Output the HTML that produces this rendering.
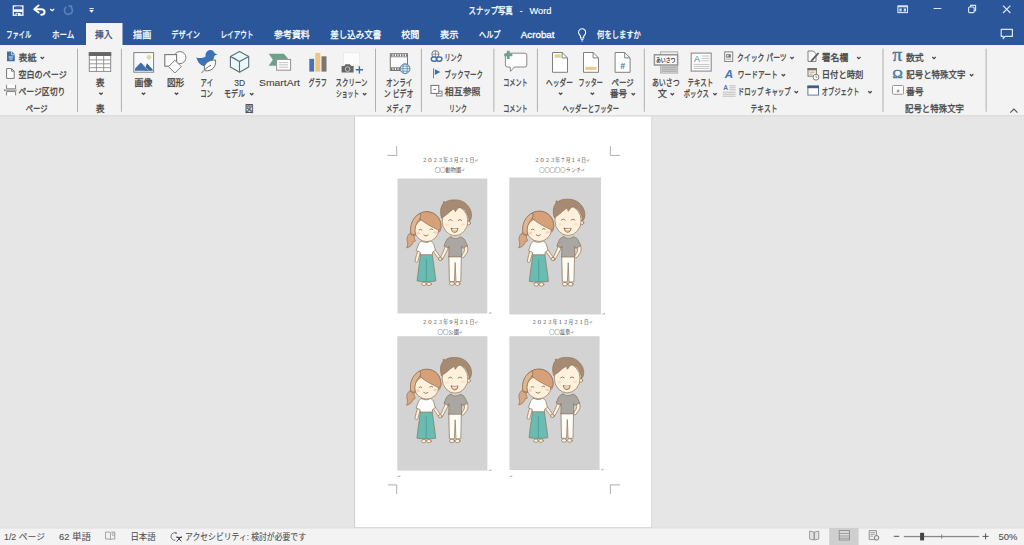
<!DOCTYPE html>
<html lang="ja"><head><meta charset="utf-8"><title>スナップ写真 - Word</title>
<style>html,body{margin:0;padding:0;background:#e6e6e6;overflow:hidden}body{width:1024px;height:545px;position:relative}svg{position:absolute;left:0;top:0;display:block}.t{font-family:"Liberation Sans","Noto Sans CJK JP",sans-serif;}.s{font-family:"Liberation Serif","Noto Serif CJK SC",serif;}text{white-space:pre}</style></head><body>
<svg width="1024" height="545" viewBox="0 0 1024 545">
<rect x="0" y="0" width="1024" height="545" fill="#e6e6e6"/>
<rect x="0" y="0" width="1024" height="45.3" fill="#2b579a"/>
<rect x="0" y="45" width="1024" height="70.4" fill="#f3f3f3"/>
<rect x="0" y="115.2" width="1024" height="1.3" fill="#dbdbdb"/>
<rect x="86" y="23" width="36.5" height="23" fill="#f3f3f3"/>
<rect x="354.2" y="116.5" width="297.9" height="411.5" fill="#cdcdcd"/>
<rect x="355.1" y="116.5" width="296.3" height="410.7" fill="#ffffff"/>
<rect x="0" y="528" width="1024" height="17" fill="#f3f3f3"/>
<rect x="0" y="527.6" width="1024" height="0.9" fill="#dedede"/>
<text class="t" x="468.60" y="14.24" font-size="9" fill="#fff" stroke="#fff" stroke-width="0.28" textLength="44.10" lengthAdjust="spacingAndGlyphs">スナップ写真</text>
<text class="t" x="520.00" y="14.24" font-size="9" fill="#fff" stroke="#fff" stroke-width="0.28" textLength="2.40" lengthAdjust="spacingAndGlyphs">-</text>
<text class="t" x="529.50" y="14.24" font-size="9" fill="#fff" stroke="#fff" stroke-width="0.12" textLength="22.00" lengthAdjust="spacingAndGlyphs">Word</text>
<g fill="none" stroke="#fff" stroke-width="1.3"><rect x="13.3" y="6" width="9.6" height="9.2"/></g>
<rect x="13.3" y="9.3" width="9.6" height="2.6" fill="#fff"/>
<rect x="15.6" y="12.9" width="5" height="2.6" fill="#fff"/>
<rect x="16.6" y="13.6" width="1.4" height="1.9" fill="#2b579a"/>
<rect x="15.3" y="6.4" width="5.8" height="2.2" fill="#3c66a8"/>
<path d="M35.5 9.2 H41 C43.6 9.2 44.6 10.6 44.6 12 C44.6 13.7 43.2 14.7 41.2 14.7" fill="none" stroke="#fff" stroke-width="1.9" stroke-linecap="round"/>
<path d="M38.6 5.4 L34.2 9.2 L38.6 12.6" fill="none" stroke="#fff" stroke-width="1.9" stroke-linejoin="round" stroke-linecap="round"/>
<path d="M50.2 9 L52.2 10.7 L54.2 9" fill="none" stroke="#fff" stroke-width="1.3"/>
<path d="M70.6 7 A4 4 0 1 1 66.2 7" fill="none" stroke="#5b80bb" stroke-width="1.6"/>
<path d="M68.3 6 H71.5 V9.2" fill="none" stroke="#5b80bb" stroke-width="1.4"/>
<rect x="89.4" y="8.2" width="4.4" height="0.9" fill="#fff"/>
<path d="M89.3 10 H93.9 L91.6 12.7 Z" fill="#fff"/>
<rect x="897.9" y="6" width="9.6" height="6.6" fill="none" stroke="#dbe4f3" stroke-width="1.1"/>
<rect x="897.9" y="5.6" width="9.6" height="1.7" fill="#dbe4f3"/>
<path d="M899.4 11.4 V8.6 H901.8 V11.4 Z M903.6 11.4 V8.6 H906 V11.4 Z" fill="#dbe4f3"/>
<path d="M901.2 10.4 L902.7 8.9 L904.2 10.4" fill="none" stroke="#2b579a" stroke-width="0.8"/>
<rect x="933.6" y="8" width="7.8" height="1" fill="#dbe4f3"/>
<rect x="968.6" y="7" width="5.6" height="5.6" rx="1" fill="none" stroke="#dbe4f3" stroke-width="1.1"/>
<path d="M970.6 7 V5.4 H975.6 V10.6 H974.2" fill="none" stroke="#dbe4f3" stroke-width="1.1"/>
<path d="M1003 5.6 L1010.4 13 M1010.4 5.6 L1003 13" fill="none" stroke="#dbe4f3" stroke-width="1.2"/>
<path d="M1001.2 29.3 H1012.4 V36.4 H1005 L1003.2 38.6 V36.4 H1001.2 Z" fill="none" stroke="#dbe4f3" stroke-width="1.2" stroke-linejoin="round"/>
<path d="M580.6 38 V36.6 C580.6 35.4 578.6 34.6 578.6 32.4 A3.5 3.6 0 0 1 585.7 32.4 C585.7 34.6 583.7 35.4 583.7 36.6 V38 Z" fill="none" stroke="#fff" stroke-width="1.1" stroke-linejoin="round"/>
<path d="M580.8 39.6 H583.5 M581.3 41 H583" fill="none" stroke="#fff" stroke-width="0.9"/>
<text class="t" x="6.30" y="38.04" font-size="9" fill="#ffffff" stroke="#ffffff" stroke-width="0.28" textLength="24.90" lengthAdjust="spacingAndGlyphs">ファイル</text>
<text class="t" x="52.00" y="38.04" font-size="9" fill="#ffffff" stroke="#ffffff" stroke-width="0.28" textLength="22.40" lengthAdjust="spacingAndGlyphs">ホーム</text>
<text class="t" x="133.10" y="38.04" font-size="9" fill="#ffffff" stroke="#ffffff" stroke-width="0.28" textLength="18.20" lengthAdjust="spacingAndGlyphs">描画</text>
<text class="t" x="171.30" y="38.04" font-size="9" fill="#ffffff" stroke="#ffffff" stroke-width="0.28" textLength="28.70" lengthAdjust="spacingAndGlyphs">デザイン</text>
<text class="t" x="220.40" y="38.04" font-size="9" fill="#ffffff" stroke="#ffffff" stroke-width="0.28" textLength="33.10" lengthAdjust="spacingAndGlyphs">レイアウト</text>
<text class="t" x="274.10" y="38.04" font-size="9" fill="#ffffff" stroke="#ffffff" stroke-width="0.28" textLength="35.70" lengthAdjust="spacingAndGlyphs">参考資料</text>
<text class="t" x="330.30" y="38.04" font-size="9" fill="#ffffff" stroke="#ffffff" stroke-width="0.28" textLength="51.00" lengthAdjust="spacingAndGlyphs">差し込み文書</text>
<text class="t" x="401.30" y="38.04" font-size="9" fill="#ffffff" stroke="#ffffff" stroke-width="0.28" textLength="18.10" lengthAdjust="spacingAndGlyphs">校閲</text>
<text class="t" x="440.00" y="38.04" font-size="9" fill="#ffffff" stroke="#ffffff" stroke-width="0.28" textLength="18.50" lengthAdjust="spacingAndGlyphs">表示</text>
<text class="t" x="479.00" y="38.04" font-size="9" fill="#ffffff" stroke="#ffffff" stroke-width="0.28" textLength="21.50" lengthAdjust="spacingAndGlyphs">ヘルプ</text>
<text class="t" x="520.80" y="38.04" font-size="9" fill="#ffffff" stroke="#ffffff" stroke-width="0.28" textLength="33.70" lengthAdjust="spacingAndGlyphs">Acrobat</text>
<text class="t" x="597.10" y="38.04" font-size="9" fill="#ffffff" stroke="#ffffff" stroke-width="0.28" textLength="43.80" lengthAdjust="spacingAndGlyphs">何をしますか</text>
<text class="t" x="95.00" y="38.14" font-size="9" fill="#34507e" stroke="#34507e" stroke-width="0.28" textLength="17.40" lengthAdjust="spacingAndGlyphs">挿入</text>
<rect x="77.00" y="48.6" width="1" height="63.199999999999996" fill="#b0b0b0"/>
<rect x="120.90" y="48.6" width="1" height="63.199999999999996" fill="#b0b0b0"/>
<rect x="375.00" y="48.6" width="1" height="63.199999999999996" fill="#b0b0b0"/>
<rect x="420.90" y="48.6" width="1" height="63.199999999999996" fill="#b0b0b0"/>
<rect x="493.40" y="48.6" width="1" height="63.199999999999996" fill="#b0b0b0"/>
<rect x="536.90" y="48.6" width="1" height="63.199999999999996" fill="#b0b0b0"/>
<rect x="643.80" y="48.6" width="1" height="63.199999999999996" fill="#b0b0b0"/>
<rect x="882.50" y="48.6" width="1" height="63.199999999999996" fill="#b0b0b0"/>
<rect x="985.60" y="48.6" width="1" height="63.199999999999996" fill="#b0b0b0"/>
<text class="t" x="18.50" y="61.14" font-size="9" fill="#444444" stroke="#444444" stroke-width="0.28" textLength="17.80" lengthAdjust="spacingAndGlyphs">表紙</text>
<path d="M40.60 57.00 L42.30 58.60 L44.00 57.00" fill="none" stroke="#4a4a4a" stroke-width="1.3"/>
<text class="t" x="18.50" y="78.24" font-size="9" fill="#444444" stroke="#444444" stroke-width="0.28" textLength="48.20" lengthAdjust="spacingAndGlyphs">空白のページ</text>
<text class="t" x="18.50" y="95.24" font-size="9" fill="#444444" stroke="#444444" stroke-width="0.28" textLength="46.90" lengthAdjust="spacingAndGlyphs">ページ区切り</text>
<text class="t" x="444.40" y="61.14" font-size="9" fill="#444444" stroke="#444444" stroke-width="0.28" textLength="18.10" lengthAdjust="spacingAndGlyphs">リンク</text>
<text class="t" x="444.40" y="78.24" font-size="9" fill="#444444" stroke="#444444" stroke-width="0.28" textLength="38.60" lengthAdjust="spacingAndGlyphs">ブックマーク</text>
<text class="t" x="444.80" y="95.24" font-size="9" fill="#444444" stroke="#444444" stroke-width="0.28" textLength="35.70" lengthAdjust="spacingAndGlyphs">相互参照</text>
<text class="t" x="737.10" y="61.14" font-size="9" fill="#444444" stroke="#444444" stroke-width="0.28" textLength="49.60" lengthAdjust="spacingAndGlyphs">クイック パーツ</text>
<path d="M790.30 57.00 L792.00 58.60 L793.70 57.00" fill="none" stroke="#4a4a4a" stroke-width="1.3"/>
<text class="t" x="737.80" y="78.24" font-size="9" fill="#444444" stroke="#444444" stroke-width="0.28" textLength="40.00" lengthAdjust="spacingAndGlyphs">ワードアート</text>
<path d="M781.70 74.20 L783.40 75.80 L785.10 74.20" fill="none" stroke="#4a4a4a" stroke-width="1.3"/>
<text class="t" x="737.80" y="95.24" font-size="9" fill="#444444" stroke="#444444" stroke-width="0.28" textLength="52.80" lengthAdjust="spacingAndGlyphs">ドロップ キャップ</text>
<path d="M794.60 91.20 L796.30 92.80 L798.00 91.20" fill="none" stroke="#4a4a4a" stroke-width="1.3"/>
<text class="t" x="821.80" y="61.14" font-size="9" fill="#444444" stroke="#444444" stroke-width="0.28" textLength="26.40" lengthAdjust="spacingAndGlyphs">署名欄</text>
<path d="M857.10 57.00 L858.80 58.60 L860.50 57.00" fill="none" stroke="#4a4a4a" stroke-width="1.3"/>
<text class="t" x="821.80" y="78.24" font-size="9" fill="#444444" stroke="#444444" stroke-width="0.28" textLength="41.60" lengthAdjust="spacingAndGlyphs">日付と時刻</text>
<text class="t" x="821.80" y="95.24" font-size="9" fill="#444444" stroke="#444444" stroke-width="0.28" textLength="37.60" lengthAdjust="spacingAndGlyphs">オブジェクト</text>
<path d="M868.30 91.20 L870.00 92.80 L871.70 91.20" fill="none" stroke="#4a4a4a" stroke-width="1.3"/>
<text class="t" x="905.90" y="61.14" font-size="9" fill="#444444" stroke="#444444" stroke-width="0.28" textLength="17.80" lengthAdjust="spacingAndGlyphs">数式</text>
<path d="M932.30 57.00 L934.00 58.60 L935.70 57.00" fill="none" stroke="#4a4a4a" stroke-width="1.3"/>
<text class="t" x="906.30" y="78.24" font-size="9" fill="#444444" stroke="#444444" stroke-width="0.28" textLength="59.10" lengthAdjust="spacingAndGlyphs">記号と特殊文字</text>
<path d="M969.90 74.20 L971.60 75.80 L973.30 74.20" fill="none" stroke="#4a4a4a" stroke-width="1.3"/>
<text class="t" x="905.90" y="95.24" font-size="9" fill="#444444" stroke="#444444" stroke-width="0.28" textLength="17.80" lengthAdjust="spacingAndGlyphs">番号</text>
<text class="t" x="95.80" y="85.54" font-size="9" fill="#444444" stroke="#444444" stroke-width="0.28" textLength="8.80" lengthAdjust="spacingAndGlyphs">表</text>
<path d="M99.30 92.70 L101.00 94.30 L102.70 92.70" fill="none" stroke="#4a4a4a" stroke-width="1.3"/>
<text class="t" x="134.50" y="85.54" font-size="9" fill="#444444" stroke="#444444" stroke-width="0.28" textLength="17.90" lengthAdjust="spacingAndGlyphs">画像</text>
<path d="M141.80 92.70 L143.50 94.30 L145.20 92.70" fill="none" stroke="#4a4a4a" stroke-width="1.3"/>
<text class="t" x="166.90" y="85.54" font-size="9" fill="#444444" stroke="#444444" stroke-width="0.28" textLength="17.30" lengthAdjust="spacingAndGlyphs">図形</text>
<path d="M174.80 92.70 L176.50 94.30 L178.20 92.70" fill="none" stroke="#4a4a4a" stroke-width="1.3"/>
<text class="t" x="200.60" y="85.54" font-size="9" fill="#444444" stroke="#444444" stroke-width="0.28" textLength="12.40" lengthAdjust="spacingAndGlyphs">アイ</text>
<text class="t" x="200.20" y="97.24" font-size="9" fill="#444444" stroke="#444444" stroke-width="0.28" textLength="12.80" lengthAdjust="spacingAndGlyphs">コン</text>
<text class="t" x="234.30" y="85.54" font-size="9" fill="#444444" stroke="#444444" stroke-width="0.12" textLength="10.80" lengthAdjust="spacingAndGlyphs">3D</text>
<text class="t" x="224.00" y="97.24" font-size="9" fill="#444444" stroke="#444444" stroke-width="0.28" textLength="21.10" lengthAdjust="spacingAndGlyphs">モデル</text>
<path d="M250.00 93.20 L251.70 94.80 L253.40 93.20" fill="none" stroke="#4a4a4a" stroke-width="1.3"/>
<text class="t" x="259.00" y="85.54" font-size="9" fill="#444444" stroke="#444444" stroke-width="0.1" textLength="41.00" lengthAdjust="spacingAndGlyphs">SmartArt</text>
<text class="t" x="308.50" y="85.54" font-size="9" fill="#444444" stroke="#444444" stroke-width="0.28" textLength="18.50" lengthAdjust="spacingAndGlyphs">グラフ</text>
<text class="t" x="335.60" y="85.54" font-size="9" fill="#444444" stroke="#444444" stroke-width="0.28" textLength="32.00" lengthAdjust="spacingAndGlyphs">スクリーン</text>
<text class="t" x="335.90" y="97.24" font-size="9" fill="#444444" stroke="#444444" stroke-width="0.28" textLength="23.10" lengthAdjust="spacingAndGlyphs">ショット</text>
<path d="M362.90 93.20 L364.60 94.80 L366.30 93.20" fill="none" stroke="#4a4a4a" stroke-width="1.3"/>
<text class="t" x="386.00" y="85.54" font-size="9" fill="#444444" stroke="#444444" stroke-width="0.28" textLength="26.50" lengthAdjust="spacingAndGlyphs">オンライ</text>
<text class="t" x="383.80" y="97.24" font-size="9" fill="#444444" stroke="#444444" stroke-width="0.28" textLength="29.70" lengthAdjust="spacingAndGlyphs">ン ビデオ</text>
<text class="t" x="503.20" y="85.54" font-size="9" fill="#444444" stroke="#444444" stroke-width="0.28" textLength="24.40" lengthAdjust="spacingAndGlyphs">コメント</text>
<text class="t" x="546.10" y="85.54" font-size="9" fill="#444444" stroke="#444444" stroke-width="0.28" textLength="26.80" lengthAdjust="spacingAndGlyphs">ヘッダー</text>
<path d="M558.90 92.70 L560.60 94.30 L562.30 92.70" fill="none" stroke="#4a4a4a" stroke-width="1.3"/>
<text class="t" x="578.60" y="85.54" font-size="9" fill="#444444" stroke="#444444" stroke-width="0.28" textLength="24.10" lengthAdjust="spacingAndGlyphs">フッター</text>
<path d="M590.70 92.70 L592.40 94.30 L594.10 92.70" fill="none" stroke="#4a4a4a" stroke-width="1.3"/>
<text class="t" x="611.60" y="85.54" font-size="9" fill="#444444" stroke="#444444" stroke-width="0.28" textLength="22.10" lengthAdjust="spacingAndGlyphs">ページ</text>
<text class="t" x="609.90" y="97.24" font-size="9" fill="#444444" stroke="#444444" stroke-width="0.28" textLength="17.20" lengthAdjust="spacingAndGlyphs">番号</text>
<path d="M631.60 93.20 L633.30 94.80 L635.00 93.20" fill="none" stroke="#4a4a4a" stroke-width="1.3"/>
<text class="t" x="651.90" y="85.54" font-size="9" fill="#444444" stroke="#444444" stroke-width="0.28" textLength="27.70" lengthAdjust="spacingAndGlyphs">あいさつ</text>
<text class="t" x="657.80" y="97.24" font-size="9" fill="#444444" stroke="#444444" stroke-width="0.28" textLength="9.20" lengthAdjust="spacingAndGlyphs">文</text>
<path d="M670.60 93.20 L672.30 94.80 L674.00 93.20" fill="none" stroke="#4a4a4a" stroke-width="1.3"/>
<text class="t" x="687.50" y="85.54" font-size="9" fill="#444444" stroke="#444444" stroke-width="0.28" textLength="25.80" lengthAdjust="spacingAndGlyphs">テキスト</text>
<text class="t" x="683.80" y="97.24" font-size="9" fill="#444444" stroke="#444444" stroke-width="0.28" textLength="25.10" lengthAdjust="spacingAndGlyphs">ボックス</text>
<path d="M713.30 93.20 L715.00 94.80 L716.70 93.20" fill="none" stroke="#4a4a4a" stroke-width="1.3"/>
<text class="t" x="25.80" y="112.49" font-size="9" fill="#444444" stroke="#444444" stroke-width="0.28" textLength="21.80" lengthAdjust="spacingAndGlyphs">ページ</text>
<text class="t" x="95.80" y="112.49" font-size="9" fill="#444444" stroke="#444444" stroke-width="0.28" textLength="8.80" lengthAdjust="spacingAndGlyphs">表</text>
<text class="t" x="245.00" y="112.49" font-size="9" fill="#444444" stroke="#444444" stroke-width="0.28" textLength="8.40" lengthAdjust="spacingAndGlyphs">図</text>
<text class="t" x="386.00" y="112.49" font-size="9" fill="#444444" stroke="#444444" stroke-width="0.28" textLength="25.00" lengthAdjust="spacingAndGlyphs">メディア</text>
<text class="t" x="449.00" y="112.49" font-size="9" fill="#444444" stroke="#444444" stroke-width="0.28" textLength="17.90" lengthAdjust="spacingAndGlyphs">リンク</text>
<text class="t" x="503.20" y="112.49" font-size="9" fill="#444444" stroke="#444444" stroke-width="0.28" textLength="24.40" lengthAdjust="spacingAndGlyphs">コメント</text>
<text class="t" x="562.40" y="112.49" font-size="9" fill="#444444" stroke="#444444" stroke-width="0.28" textLength="56.80" lengthAdjust="spacingAndGlyphs">ヘッダーとフッター</text>
<text class="t" x="750.60" y="112.49" font-size="9" fill="#444444" stroke="#444444" stroke-width="0.28" textLength="26.80" lengthAdjust="spacingAndGlyphs">テキスト</text>
<text class="t" x="905.00" y="112.49" font-size="9" fill="#444444" stroke="#444444" stroke-width="0.28" textLength="59.00" lengthAdjust="spacingAndGlyphs">記号と特殊文字</text>
<path d="M1010.3 112.6 L1013.9 109 L1017.5 112.6" fill="none" stroke="#555" stroke-width="1.1"/>
<path d="M7 51.4 H12 L14.8 54.4 V61.2 H7 Z" fill="#3f6fa8"/>
<path d="M11.6 51.4 V54.8 H14.8" fill="none" stroke="#d6e2f2" stroke-width="0.9"/>
<path d="M8.6 57 H13.2 M9.4 59 H12.4" stroke="#e8eef8" stroke-width="1"/>
<path d="M6.6 68.6 H11.6 L14.2 71.19999999999999 V78.39999999999999 H6.6 Z" fill="#fff" stroke="#777" stroke-width="1.0" stroke-linejoin="round"/>
<path d="M11.6 68.6 V71.19999999999999 H14.2" fill="none" stroke="#777" stroke-width="1.0" stroke-linejoin="round"/>
<path d="M6.6 84.8 V88.8 H15.6 V84.8 M6.6 95.4 V91.6 H15.6 V95.4" fill="#fff" stroke="#808080" stroke-width="1"/>
<path d="M4.4 90.2 H16.8" stroke="#808080" stroke-width="0.9"/>
<path d="M4.2 88.9 L5.6 90.2 L4.2 91.5 Z" fill="#808080"/>
<rect x="89.3" y="52.6" width="21.4" height="18.8" fill="#fff" stroke="#8c8c8c" stroke-width="1"/>
<rect x="88.8" y="52.1" width="22.4" height="3.9" fill="#666"/>
<path d="M96.4 56 V71.4 M103.7 56 V71.4 M89.3 59.9 H110.7 M89.3 63.8 H110.7 M89.3 67.7 H110.7" stroke="#8c8c8c" stroke-width="0.9" fill="none"/>
<rect x="133.8" y="52.6" width="19.8" height="19.6" fill="#f6fafc" stroke="#7d7d7d" stroke-width="0.95"/>
<circle cx="148.9" cy="57.3" r="2.4" fill="#e2db9e"/>
<path d="M144.4 70.8 L146.9 63.3 L152.6 69.6 V70.8 Z" fill="#3b5f8e"/>
<path d="M135 70.8 V68.6 L140.8 62.4 L149.4 70.8 Z" fill="#3f6fa8"/>
<path d="M143.2 64.8 L149 70.8" stroke="#b9d0e8" stroke-width="0.7" fill="none"/>
<circle cx="179.9" cy="57.6" r="6" fill="#fcfcfc" stroke="#808080" stroke-width="1"/>
<rect x="164.8" y="54.6" width="11.8" height="11.6" fill="#fcfcfc" stroke="#777" stroke-width="1.1"/>
<path d="M174.9 60.2 L181.3 66.6 L174.9 73 L168.5 66.6 Z" fill="#fcfcfc" stroke="#808080" stroke-width="1"/>
<path d="M196.3 57.2 C198.5 58.6 202.5 58.4 205.6 56.6 C205 52.4 208 49.9 210.6 50.1 C213 50.2 214.4 52 214.6 53.2 L217.4 54.2 L214.4 55.8 C213.6 60 212 63.4 207 65.6 C202.5 67 198.4 64.4 196.3 57.2 Z" fill="#3b72b8"/>
<path d="M215.5 60 C216.4 66.4 212.4 71.4 205.2 70.8 C202.2 66 206.5 59.8 215.5 60 Z" fill="#fdfdfd" stroke="#6e6e6e" stroke-width="1"/>
<path d="M201.6 73 C204.4 69.6 207.4 66.8 211 65.2" fill="none" stroke="#6e6e6e" stroke-width="1"/>
<path d="M239.5 51.4 L248.7 56.4 V66.9 L239.5 72.2 L230.4 66.9 V56.4 Z" fill="#e9f8fb" stroke="#5c7076" stroke-width="1.1" stroke-linejoin="round"/>
<path d="M230.4 56.4 L239.5 61.6 L248.7 56.4 M239.5 61.6 V72.2 M232.8 57.6 L236.6 59.8" fill="none" stroke="#5c7076" stroke-width="1.1"/>
<path d="M268.7 53.8 H284 L288.7 59.8 L284 65.7 H268.7 L272.8 59.8 Z" fill="#6fa08c"/>
<rect x="276.6" y="59.4" width="14" height="10.8" fill="#fdfdfd" stroke="#929292" stroke-width="1"/>
<path d="M279 62.6 H288 M279 64.8 H288 M279 67.2 H288" stroke="#b8b8b8" stroke-width="0.8"/>
<rect x="309.3" y="58.8" width="4.8" height="12.8" fill="#4a72b0"/>
<rect x="315.3" y="52.9" width="5" height="18.7" fill="#f0c47e"/>
<rect x="321.5" y="56.3" width="5" height="15.3" fill="#7b7671"/>
<rect x="343.6" y="52.8" width="16" height="12.4" fill="#fcfcfc" stroke="#d8d8d8" stroke-width="0.8" stroke-dasharray="1 1"/>
<path d="M341.6 66 H344.4 L345.4 64.3 H350 L351 66 H353.6 V72.6 H341.6 Z" fill="#666"/>
<circle cx="347.6" cy="69.1" r="2.3" fill="#666" stroke="#c4c4c4" stroke-width="1"/>
<path d="M355.8 69.8 H363 M359.4 66.2 V73.4" stroke="#3f6fa8" stroke-width="1.4"/>
<rect x="390.3" y="53.7" width="17.2" height="16.8" fill="#fcfcfc" stroke="#777" stroke-width="1"/>
<path d="M391 55.3 H407 M391 69 H407" stroke="#777" stroke-width="2.2" stroke-dasharray="1.5 1"/>
<path d="M390.3 56.8 H407.5 M390.3 67.5 H407.5" stroke="#777" stroke-width="0.7"/>
<circle cx="405.1" cy="68.7" r="4.9" fill="#e6f1f7" stroke="#5d88a8" stroke-width="1"/>
<ellipse cx="405.1" cy="68.7" rx="2.2" ry="4.9" fill="none" stroke="#5d88a8" stroke-width="0.8"/>
<path d="M400.2 68.7 H410 M401 66.2 H409.2 M401 71.2 H409.2" stroke="#5d88a8" stroke-width="0.8"/>
<circle cx="435.4" cy="54.2" r="3.6" fill="#f3f3f3" stroke="#808080" stroke-width="1"/>
<path d="M431.8 54.2 H439 M435.4 50.6 V57.8" stroke="#808080" stroke-width="0.8"/>
<rect x="431.3" y="57" width="5.6" height="4.2" rx="2.1" fill="#f3f3f3" stroke="#3f6fa8" stroke-width="1.4"/>
<rect x="436.3" y="57" width="5.6" height="4.2" rx="2.1" fill="none" stroke="#3f6fa8" stroke-width="1.4"/>
<rect x="433" y="68.3" width="1" height="10" fill="#808080"/>
<path d="M434.8 69.2 L440.4 72 L434.8 75 Z" fill="#3f6fa8"/>
<rect x="436.6" y="91.2" width="5.4" height="4.8" fill="#fff" stroke="#808080" stroke-width="1"/>
<rect x="431" y="85.4" width="7.8" height="8" fill="#fff" stroke="#707070" stroke-width="1"/>
<path d="M433.4 89.4 H436.2 M439.4 93.6 H441" stroke="#707070" stroke-width="0.9"/>
<path d="M507.4 53.2 H524.8 Q526.8 53.2 526.8 55.2 V65 Q526.8 67 524.8 67 H514.4 L510.5 71.4 L510.2 67 H507.4 Q505.4 67 505.4 65 V55.2 Q505.4 53.2 507.4 53.2 Z" fill="#fdfdfd" stroke="#8a8a8a" stroke-width="1"/>
<path d="M504.2 54.8 H512.4 M508.3 50.7 V58.9" stroke="#6fa08c" stroke-width="2.8"/>
<path d="M552.5 52.5 H562.1 L567.5 57.9 V72.3 H552.5 Z" fill="#fefefe" stroke="#808080" stroke-width="1.0" stroke-linejoin="round"/>
<path d="M562.1 52.5 V57.9 H567.5" fill="none" stroke="#808080" stroke-width="1.0" stroke-linejoin="round"/>
<rect x="554.6" y="54.5" width="6.2" height="3.2" fill="#dfd48e"/>
<path d="M583.5 52.5 H593.1 L598.5 57.9 V72.3 H583.5 Z" fill="#fefefe" stroke="#808080" stroke-width="1.0" stroke-linejoin="round"/>
<path d="M593.1 52.5 V57.9 H598.5" fill="none" stroke="#808080" stroke-width="1.0" stroke-linejoin="round"/>
<rect x="585.3" y="66.8" width="11.2" height="3.1" fill="#edca8c"/>
<path d="M615.1 52.5 H624.7 L630.1 57.9 V72.3 H615.1 Z" fill="#fefefe" stroke="#808080" stroke-width="1.0" stroke-linejoin="round"/>
<path d="M624.7 52.5 V57.9 H630.1" fill="none" stroke="#808080" stroke-width="1.0" stroke-linejoin="round"/>
<text class="t" x="622.6" y="69.2" font-size="8.5" font-weight="bold" font-style="italic" text-anchor="middle" fill="#3f6fa8">#</text>
<rect x="660.6" y="51.8" width="17" height="21.3" fill="#ececec" stroke="#b0b0b0" stroke-width="1"/>
<rect x="661.1" y="65.6" width="16" height="7" fill="#c6c6c6"/>
<path d="M662 67.4 H676.4 M662 69.4 H676.4 M662 71.4 H676.4" stroke="#acacac" stroke-width="0.9"/>
<rect x="654.4" y="54.8" width="23.2" height="10.2" fill="#fdfdfd" stroke="#959595" stroke-width="1.5"/>
<text class="t" x="656" y="62.2" font-size="5.2" font-weight="bold" fill="#444" textLength="19.4" lengthAdjust="spacingAndGlyphs">あいさつ</text>
<rect x="691.2" y="53.1" width="20" height="18" fill="#fdfdfd" stroke="#8c8c8c" stroke-width="1.1"/>
<text class="t" x="694" y="62.4" font-size="9" fill="#5b82ad">A</text>
<path d="M701.6 56 H709.4 M701.6 58.4 H709.4 M701.6 60.8 H709.4 M693.6 64.4 H709.4 M693.6 66.4 H709.4 M693.6 68.4 H709.4" stroke="#b5b5b5" stroke-width="0.8"/>
<rect x="724.7" y="51.9" width="8" height="9.6" fill="#f6f6f6" stroke="#858585" stroke-width="1"/>
<rect x="726.2" y="54.2" width="4.6" height="3.4" fill="#707070"/>
<rect x="727" y="55" width="1.6" height="1.6" fill="#e8e8e8"/>
<path d="M726.2 59.2 H731.2" stroke="#999" stroke-width="0.8"/>
<text class="t" x="724.8" y="77.9" font-size="11.5" font-weight="bold" font-style="italic" fill="#3f7ab8">A</text>
<text class="t" x="723.2" y="90.3" font-size="6.6" font-weight="bold" fill="#4a78b0">A</text>
<path d="M729.4 85.8 H735.6 M729.4 87.8 H735.6 M729.4 89.8 H735.6 M722.8 92.2 H735.6 M722.8 94.2 H735.6 M722.8 96.2 H735.6" stroke="#b0b0b0" stroke-width="0.8"/>
<path d="M808 51 H813.4 L816 53.8 V61.4 H808 Z" fill="#fbfbfb" stroke="#808080" stroke-width="1"/>
<path d="M818.6 53 L811.6 60.6" stroke="#595959" stroke-width="1.7"/>
<path d="M810.4 62 L811 59.8 L812.6 61.2 Z" fill="#595959"/>
<rect x="808" y="68.6" width="8.4" height="7.6" fill="#f1efe9" stroke="#857b6c" stroke-width="1"/>
<rect x="807.5" y="68.1" width="9.4" height="2.2" fill="#7b705f"/>
<path d="M809.6 72.2 H814.6 M809.6 74.2 H812.6" stroke="#a79f92" stroke-width="0.8"/>
<circle cx="816" cy="77.2" r="2.9" fill="#fdfdfd" stroke="#808080" stroke-width="1"/>
<path d="M816 75.6 V77.4 H817.4" fill="none" stroke="#808080" stroke-width="0.7"/>
<rect x="807.9" y="86.1" width="10.6" height="9" fill="#fdfdfd" stroke="#5f7f9e" stroke-width="1"/>
<rect x="807.4" y="85.6" width="11.6" height="2.6" fill="#3e5f82"/>
<text class="s" x="892.4" y="61" font-size="18.5" fill="#4a7aa0" stroke="#4a7aa0" stroke-width="0.4" textLength="9.6" lengthAdjust="spacingAndGlyphs">π</text>
<text class="s" x="892.4" y="77.8" font-size="12.4" fill="#4a7aa0" stroke="#4a7aa0" stroke-width="0.45" textLength="10.2" lengthAdjust="spacingAndGlyphs">Ω</text>
<rect x="892.5" y="85.5" width="11" height="8.8" rx="1" fill="#fdfdfd" stroke="#9a9a9a" stroke-width="1"/>
<text class="t" x="898" y="93.2" font-size="4.6" text-anchor="middle" fill="#666">#</text>
<defs><g id="cp" stroke-linejoin="round" stroke-linecap="round">
<path d="M15.6 53 C11.2 54.4 8.6 58.6 9.8 62.8 C10.6 65.6 10 67.6 9.2 69.4 C12.8 68.6 15.4 66 15.8 62.8 C16.8 63.4 17.8 63 18 62 C16.4 60 16.2 56 17.4 54 Z" fill="#d9a781" stroke="#8d7055" stroke-width="0.68"/>
<path d="M20.6 71.4 C19.4 75 18.2 79 17.6 82.4 C17.6 84 20 84.4 20.4 82.8 C21.2 79.6 22.6 75.6 23.4 72.6 Z" fill="#fdf1dc" stroke="#8d7055" stroke-width="0.68"/>
<path d="M35.2 71.6 C37 75 39.6 78.4 41.6 80.6 C42.8 81.6 44.2 80 43.2 78.8 C41.4 76.4 39.2 73 37.4 70.6 Z" fill="#fdf1dc" stroke="#8d7055" stroke-width="0.68"/>
<ellipse cx="26.6" cy="105.4" rx="2.3" ry="1.7" fill="#fdf1dc" stroke="#8d7055" stroke-width="0.68"/><ellipse cx="31.6" cy="105.4" rx="2.3" ry="1.7" fill="#fdf1dc" stroke="#8d7055" stroke-width="0.68"/>
<path d="M23.2 75.6 H34.8 C36 84 37.4 93 38.4 102.4 C34 103.4 24 103.4 19.6 102.4 C20.6 93 22 84 23.2 75.6 Z" fill="#6abcb3" stroke="#8d7055" stroke-width="0.68"/>
<path d="M28.9 81 V102.8" fill="none" stroke="#3f8f87" stroke-width="0.6"/>
<path d="M24.4 62.6 C22.6 63 21.6 64.4 21 66.2 L18.8 72.2 L22.6 73.6 L23 76.2 H35 L35.2 73.6 L38 71.8 L36.4 66 C35.8 64.2 34.6 63 32.8 62.6 C31 64.4 26.4 64.4 24.4 62.6 Z" fill="#fdfdfb" stroke="#8d7055" stroke-width="0.68"/>
<path d="M13.4 55.4 C11.6 45 17.6 33.4 29.4 33.2 C38.6 33.2 43.8 40.4 43.6 48.6 C43.6 50.6 43 52.4 42 53.6 L16 57 Z" fill="#d9a781" stroke="#8d7055" stroke-width="0.68"/>
<ellipse cx="29.3" cy="51.6" rx="12" ry="11.5" fill="#fdf1dc" stroke="#8d7055" stroke-width="0.68"/>
<path d="M22.4 40.2 C27 44.6 34.6 48.6 41.6 51.8 C42.6 50.8 43.6 49.6 43.6 48 C43.6 40.4 38.4 33.4 29.4 33.2 C26.6 33.2 24.4 33.8 22.6 35 C23.6 36.6 23.4 38.6 22.4 40.2 Z" fill="#d6a079" stroke="#8d7055" stroke-width="0.68"/>
<path d="M22.4 40.2 C19.6 43 17.6 47.4 17.4 52 C17.4 53.6 17.6 55 18.2 56.2 L13.6 55.6 C11.6 46 16 38.2 22.6 35 C23.6 36.6 23.4 38.6 22.4 40.2 Z" fill="#e0b592" stroke="#8d7055" stroke-width="0.68"/>
<path d="M21.5 51.5 Q23 49.9 24.500 51.5 M32.4 51 Q33.9 49.4 35.4 51" fill="none" stroke="#7a5a40" stroke-width="0.75"/>
<path d="M26.4 56.6 Q28.5 58.6 30.6 56.6" fill="none" stroke="#7a5a40" stroke-width="0.75"/>
<ellipse cx="20.6" cy="54.8" rx="2" ry="1.3" fill="#f6bfae" stroke="none" opacity="0.7"/><ellipse cx="37.8" cy="54" rx="2" ry="1.3" fill="#f6bfae" stroke="none" opacity="0.7"/>
<path d="M48 67.4 C46.6 71.6 44.6 76 42.6 79.6 C42 81.2 44.2 82.2 45 80.8 C47 77.4 49.4 73 51 69.4 Z" fill="#fdf1dc" stroke="#8d7055" stroke-width="0.68"/>
<path d="M66.6 68.4 C67.4 70 67.4 72 66.4 73.8 L64 77.6 C63.6 79.2 65.4 79.8 66.4 78.8 L69.6 74.4 C71 72 70.8 69 69.6 66.6 Z" fill="#fdf1dc" stroke="#8d7055" stroke-width="0.68"/>
<ellipse cx="54.6" cy="105.2" rx="2.5" ry="1.8" fill="#fdf1dc" stroke="#8d7055" stroke-width="0.68"/><ellipse cx="60.2" cy="105.2" rx="2.5" ry="1.8" fill="#fdf1dc" stroke="#8d7055" stroke-width="0.68"/>
<path d="M51.8 77.6 H64 L63.4 103 H58.6 L57.8 84 L57 103 H52.4 Z" fill="#fdfcf6" stroke="#8d7055" stroke-width="0.68"/>
<path d="M53.6 58.4 C51.4 58.8 49.8 60 48.8 62.2 L46.6 67.4 L50.8 69.6 L51.6 67.6 L51.4 78.4 H64.2 L64 67.6 L65.2 69.8 L70.2 67.4 L67.6 61.8 C66.6 59.8 65 58.8 62.6 58.4 C60.6 60.6 55.8 60.6 53.6 58.4 Z" fill="#aaa6a1" stroke="#8d7055" stroke-width="0.68"/>
<circle cx="71.3" cy="44.6" r="1.8" fill="#fdf1dc" stroke="#8d7055" stroke-width="0.68"/>
<ellipse cx="57.7" cy="42.5" rx="12.9" ry="14.7" fill="#fdf1dc" stroke="#8d7055" stroke-width="0.68"/>
<path d="M44.2 39.2 C42.200 33.6 43.2 28.2 46 24.8 C45.6 24 45.8 23.2 46.6 22.8 C46.8 23.6 47.2 24 47.800 23.800 C50.4 21.800 54 21.3 57.9 21.4 C62.4 21.4 66 22.800 68.6 25.2 C72.6 28.800 74.6 33.600 74.1 38 C73.800 40.2 73.100 41.800 72 42.800 C71.800 39.6 70.6 36 68.4 32.400 C66.600 30.400 64.600 29.2 62.700 28.800 C61.400 29.2 60.400 30 59.700 30.800 L57.900 33.300 C57.500 32.200 57.100 31.200 56.700 30.400 C54.600 31.400 52.500 33 50.600 34.900 C48.800 36.400 47.400 37.600 46.200 38.200 C45.500 38.700 44.800 39 44.200 39.200 Z" fill="#a78a72" stroke="#8d7055" stroke-width="0.68"/>
<path d="M51.2 41.9 Q53 39.9 54.800 41.9 M60.6 41.9 Q62.5 39.9 64.4 41.9" fill="none" stroke="#7a5a40" stroke-width="0.75"/>
<path d="M53.9 50.1 Q57.3 51 60.7 50 Q60.2 54 57.3 54 Q54.4 54 53.9 50.1 Z" fill="#f3c1aa" stroke="#7a5a40" stroke-width="0.7"/>
<path d="M54.800 50.500 Q57.300 51.200 59.800 50.400 L59.600 51.300 Q57.300 51.900 55 51.300 Z" fill="#fffdf6" stroke="none"/>
<ellipse cx="49.8" cy="46.4" rx="1.9" ry="1.2" fill="#f8d2c0" stroke="none" opacity="0.6"/><ellipse cx="65.8" cy="46" rx="1.9" ry="1.2" fill="#f8d2c0" stroke="none" opacity="0.6"/>
<ellipse cx="42.9" cy="80.4" rx="1.9" ry="1.7" fill="#f7dfc0" stroke="#8d7055" stroke-width="0.68"/>
</g></defs>
<path d="M387.4 155.4 H396.7 V146.2 M620 155.4 H610.4 V146.2 M388 484.9 H396.7 V494 M620 484.9 H610.4 V494" fill="none" stroke="#9a9a9a" stroke-width="0.8"/>
<rect x="397.5" y="178.5" width="89.8" height="135.0" fill="#d3d3d3"/>
<use href="#cp" transform="translate(397.50 178.50) scale(0.9978 1.0000)"/>
<rect x="509.3" y="177.5" width="91.7" height="136.9" fill="#d3d3d3"/>
<use href="#cp" transform="translate(509.30 177.50) scale(1.0189 1.0141)"/>
<rect x="397.3" y="336.2" width="90.1" height="134.4" fill="#d3d3d3"/>
<use href="#cp" transform="translate(397.30 336.20) scale(1.0011 0.9956)"/>
<rect x="509.4" y="336.2" width="90.2" height="133.8" fill="#d3d3d3"/>
<use href="#cp" transform="translate(509.40 336.20) scale(1.0022 0.9911)"/>
<text class="s" x="421.90" y="161.99" font-size="5.25" fill="#4a4a4a" stroke="#4a4a4a" stroke-width="0.04" textLength="52.70" lengthAdjust="spacingAndGlyphs">２０２３年３月２１日</text>
<path d="M477.20 158.90 V160.70 H475.20 M476.00 159.90 L475.20 160.70 L476.00 161.50" fill="none" stroke="#777" stroke-width="0.45"/>
<text class="s" x="435.00" y="171.69" font-size="5.25" fill="#4a4a4a" stroke="#4a4a4a" stroke-width="0.04" textLength="26.30" lengthAdjust="spacingAndGlyphs">〇〇動物園</text>
<path d="M463.90 168.60 V170.40 H461.90 M462.70 169.60 L461.90 170.40 L462.70 171.20" fill="none" stroke="#777" stroke-width="0.45"/>
<text class="s" x="534.30" y="161.99" font-size="5.25" fill="#4a4a4a" stroke="#4a4a4a" stroke-width="0.04" textLength="52.00" lengthAdjust="spacingAndGlyphs">２０２３年７月１４日</text>
<path d="M588.90 158.90 V160.70 H586.90 M587.70 159.90 L586.90 160.70 L587.70 161.50" fill="none" stroke="#777" stroke-width="0.45"/>
<text class="s" x="539.20" y="171.69" font-size="5.25" fill="#4a4a4a" stroke="#4a4a4a" stroke-width="0.04" textLength="42.00" lengthAdjust="spacingAndGlyphs">〇〇〇〇〇ランチ</text>
<path d="M583.80 168.60 V170.40 H581.80 M582.60 169.60 L581.80 170.40 L582.60 171.20" fill="none" stroke="#777" stroke-width="0.45"/>
<text class="s" x="421.90" y="323.99" font-size="5.25" fill="#4a4a4a" stroke="#4a4a4a" stroke-width="0.04" textLength="52.70" lengthAdjust="spacingAndGlyphs">２０２３年９月２１日</text>
<path d="M477.20 320.90 V322.70 H475.20 M476.00 321.90 L475.20 322.70 L476.00 323.50" fill="none" stroke="#777" stroke-width="0.45"/>
<text class="s" x="437.60" y="333.89" font-size="5.25" fill="#4a4a4a" stroke="#4a4a4a" stroke-width="0.04" textLength="21.50" lengthAdjust="spacingAndGlyphs">〇〇公園</text>
<path d="M461.70 330.80 V332.60 H459.70 M460.50 331.80 L459.70 332.60 L460.50 333.40" fill="none" stroke="#777" stroke-width="0.45"/>
<text class="s" x="531.50" y="323.99" font-size="5.25" fill="#4a4a4a" stroke="#4a4a4a" stroke-width="0.04" textLength="57.60" lengthAdjust="spacingAndGlyphs">２０２３年１２月２１日</text>
<path d="M591.70 320.90 V322.70 H589.70 M590.50 321.90 L589.70 322.70 L590.50 323.50" fill="none" stroke="#777" stroke-width="0.45"/>
<text class="s" x="549.30" y="333.89" font-size="5.25" fill="#4a4a4a" stroke="#4a4a4a" stroke-width="0.04" textLength="21.10" lengthAdjust="spacingAndGlyphs">〇〇温泉</text>
<path d="M573.00 330.80 V332.60 H571.00 M571.80 331.80 L571.00 332.60 L571.80 333.40" fill="none" stroke="#777" stroke-width="0.45"/>
<path d="M491.00 312.20 V313.20 H488.80" fill="none" stroke="#777" stroke-width="0.5"/>
<path d="M604.60 313.00 V314.00 H602.40" fill="none" stroke="#777" stroke-width="0.5"/>
<path d="M491.00 469.40 V470.40 H488.80" fill="none" stroke="#777" stroke-width="0.5"/>
<path d="M603.20 468.80 V469.80 H601.00" fill="none" stroke="#777" stroke-width="0.5"/>
<path d="M400.00 475.40 V476.40 H397.80" fill="none" stroke="#777" stroke-width="0.5"/>
<path d="M511.80 475.40 V476.40 H509.60" fill="none" stroke="#777" stroke-width="0.5"/>
<text class="t" x="4.00" y="539.70" font-size="8.6" fill="#505050" stroke="#505050" stroke-width="0.08" textLength="41.00" lengthAdjust="spacingAndGlyphs">1/2 ページ</text>
<text class="t" x="59.00" y="539.70" font-size="8.6" fill="#505050" stroke="#505050" stroke-width="0.08" textLength="32.00" lengthAdjust="spacingAndGlyphs">62 単語</text>
<text class="t" x="130.40" y="539.70" font-size="8.6" fill="#505050" stroke="#505050" stroke-width="0.08" textLength="25.40" lengthAdjust="spacingAndGlyphs">日本語</text>
<text class="t" x="185.00" y="539.70" font-size="8.6" fill="#505050" stroke="#505050" stroke-width="0.12" textLength="121.00" lengthAdjust="spacingAndGlyphs">アクセシビリティ: 検討が必要です</text>
<text class="t" x="998.50" y="539.84" font-size="9" fill="#505050" stroke="#505050" stroke-width="0.08" textLength="19.00" lengthAdjust="spacingAndGlyphs">50%</text>
<path d="M105.6 532 H109.4 L110.4 533 V540 L109.4 539 H105.6 Z M110.4 533 L111.4 532 H114.8 V539 H111.4 L110.4 540" fill="none" stroke="#9a9a9a" stroke-width="0.9"/>
<circle cx="113.4" cy="534.4" r="1.2" fill="#f3f3f3" stroke="#8a8a8a" stroke-width="0.7"/>
<path d="M176.4 533 A3.8 3.8 0 1 0 175.4 540.2" fill="none" stroke="#777" stroke-width="1"/>
<path d="M176 532.4 V534 M176.8 536.4 L181.4 541.4 M181.4 536.4 L176.6 541.6 M176.4 537.4 H182" fill="none" stroke="#444" stroke-width="1"/>
<rect x="829.2" y="528" width="29.4" height="17" fill="#cfcfcf"/>
<path d="M809.6 531 L814 532 V540 L809.6 539 Z M818.8 531 L814.4 532 V540 L818.8 539 Z" fill="#e2e2e2" stroke="#8a8a8a" stroke-width="0.8"/>
<rect x="839.2" y="530.6" width="10.2" height="9.4" fill="#dcdcdc" stroke="#8a8a8a" stroke-width="0.9"/>
<path d="M839.2 533.4 H849.4 M839.2 536 H849.4 M839.2 538.2 H849.4" stroke="#8a8a8a" stroke-width="0.8"/>
<path d="M869.2 530.6 H876.4 V539.6 H869.2 Z" fill="#ededed" stroke="#8a8a8a" stroke-width="0.9"/>
<path d="M870.4 532.6 H875 M870.4 534.4 H875 M870.4 536.2 H873" stroke="#8a8a8a" stroke-width="0.7"/>
<circle cx="876.6" cy="537.8" r="2.3" fill="#e8e8e8" stroke="#707070" stroke-width="0.9"/>
<rect x="893.8" y="535.8" width="5.4" height="1" fill="#555"/>
<rect x="903.8" y="535.9" width="75.4" height="1.3" fill="#8a8a8a"/>
<rect x="941.3" y="534.4" width="0.9" height="4.2" fill="#777"/>
<rect x="920.1" y="532.8" width="4" height="7.6" fill="#444"/>
<path d="M982.6 536.4 H988.6 M985.6 533.4 V539.4" stroke="#555" stroke-width="1"/>
</svg></body></html>
